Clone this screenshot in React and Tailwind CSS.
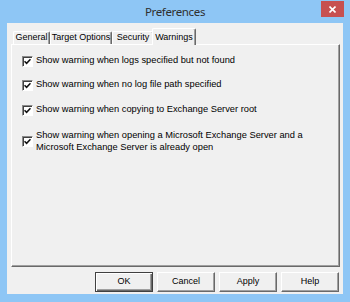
import React from "react";

function Check() {
  return (
    <span className="w-[11px] h-[11px] shrink-0 border border-t-[#8a8a8a] border-l-[#8a8a8a] border-b-[#ffffff] border-r-[#ffffff] bg-white shadow-[inset_1px_1px_0_#404040] flex items-center justify-center">
      <svg width="7" height="7" viewBox="0 0 7 7">
        <path d="M0.5 3.2 L2.6 5.3 L6.5 1.2" stroke="#111" strokeWidth="1.6" fill="none" />
      </svg>
    </span>
  );
}

function Tab({ label, w, selected }) {
  if (selected) {
    return (
      <div
        className={`relative z-10 -mx-[2px] -mb-[1px] h-[17px] ${w} shrink-0 whitespace-nowrap bg-[#f0f0f0] border-t border-l border-white border-r border-r-[#696969] shadow-[inset_-1px_0_0_#a0a0a0] rounded-tl-[2px] rounded-tr-[2px] flex items-start justify-center pt-[2px] text-[9px] text-black`}
      >
        {label}
      </div>
    );
  }
  return (
    <div
      className={`h-[13px] ${w} shrink-0 whitespace-nowrap border-t border-l border-white border-r border-r-[#696969] shadow-[inset_-1px_0_0_#a0a0a0] rounded-tl-[2px] rounded-tr-[2px] flex items-center justify-center text-[9px] text-black`}
    >
      {label}
    </div>
  );
}

function Btn({ label, def }) {
  return (
    <div
      className={`w-[58px] h-[20px] bg-[#f0f0f0] flex items-center justify-center text-[9px] text-black ${
        def
          ? "border border-[#404040] shadow-[inset_1px_1px_0_#ffffff,inset_-1px_-1px_0_#696969,inset_-2px_-2px_0_#a0a0a0]"
          : "border border-t-white border-l-white border-r-[#696969] border-b-[#696969] shadow-[inset_-1px_-1px_0_#a0a0a0]"
      }`}
    >
      {label}
    </div>
  );
}

export default function App() {
  return (
    <div className="w-[350px] h-[302px] bg-[#8ec6f5] flex flex-col font-['Liberation_Sans',Arial,sans-serif] relative overflow-hidden">
      <div className="h-[23px] flex items-center justify-center text-[11.5px] tracking-[-0.35px] text-[#2f2f2f] font-['Noto_Sans',sans-serif]">
        Preferences
      </div>
      <div className="absolute left-[321px] top-[1px] w-[23px] h-[16px] bg-[#c75050] flex items-center justify-center">
        <svg width="7" height="7" viewBox="0 0 7 7">
          <path d="M0.5 0.5 L6.5 6.5 M6.5 0.5 L0.5 6.5" stroke="#fff" strokeWidth="1.6" />
        </svg>
      </div>
      <div className="mx-[7px] h-[271px] bg-[#f0f0f0] flex flex-col">
        <div className="h-[21px] flex items-end pl-[6px]">
          <Tab label="General" w="w-[37px]" />
          <Tab label="Target Options" w="w-[62px]" />
          <Tab label="Security" w="w-[42px]" />
          <Tab label="Warnings" w="w-[44px]" selected />
        </div>
        <div className="ml-[4px] mr-[3px] h-[223px] border-t border-l border-white border-r border-b border-r-[#696969] border-b-[#696969] shadow-[inset_-1px_-1px_0_#a0a0a0] flex flex-col pl-[10px] pt-[9px] text-[9.3px] text-black">
          <div className="h-[14px] flex items-center gap-[3px]">
            <Check />
            <span>Show warning when logs specified but not found</span>
          </div>
          <div className="mt-[10px] h-[14px] flex items-center gap-[3px]">
            <Check />
            <span>Show warning when no log file path specified</span>
          </div>
          <div className="mt-[11px] h-[14px] flex items-center gap-[3px]">
            <Check />
            <span>Show warning when copying to Exchange Server root</span>
          </div>
          <div className="mt-[12px] flex items-center gap-[3px]">
            <Check />
            <span className="leading-[12px]">
              Show warning when opening a Microsoft Exchange Server and a
              <br />
              Microsoft Exchange Server is already open
            </span>
          </div>
        </div>
        <div className="mt-[5px] flex justify-end gap-[4px] pr-[4px]">
          <Btn label="OK" def />
          <Btn label="Cancel" />
          <Btn label="Apply" />
          <Btn label="Help" />
        </div>
      </div>
    </div>
  );
}
